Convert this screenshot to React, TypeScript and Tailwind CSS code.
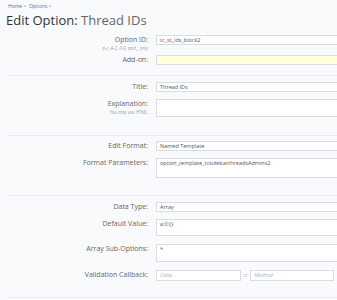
import React from "react";

type Row = {
  label: string;
  hint?: string;
  value?: string;
  kind?: "input" | "yellow" | "callback";
  h?: string;
};

function Field({ row }: { row: Row }) {
  if (row.kind === "callback") {
    return (
      <div className="flex items-center gap-[3px]">
        <div className="h-[11px] w-[85px] border border-[#dadee4] bg-white px-[3px] text-[5.5px] italic leading-[9px] text-[#b0b4ba]">
          Class
        </div>
        <span className="text-[6px] text-[#777]">::</span>
        <div className="h-[11px] w-[84px] border border-[#dadee4] bg-white px-[3px] text-[5.5px] italic leading-[9px] text-[#b0b4ba]">
          Method
        </div>
      </div>
    );
  }
  const bg = row.kind === "yellow" ? "bg-[#ffffdd]" : "bg-white";
  return (
    <div
      className={`w-[200px] border border-[#d8dde4] ${bg} px-[3px] text-[5.5px] text-[#555] ${
        row.h ?? "h-[10px]"
      } leading-[8px]`}
    >
      {row.value}
    </div>
  );
}

function FormRow({ row, mt }: { row: Row; mt: string }) {
  return (
    <div className={`flex ${mt}`}>
      <div className="w-[148px] shrink-0 text-right">
        <div className="text-[7px] leading-[10px] text-[#666]">{row.label}</div>
        {row.hint && (
          <div className="text-[4.5px] italic leading-[6px] text-[#a0a4aa]">{row.hint}</div>
        )}
      </div>
      <div className="ml-[8px]">
        <Field row={row} />
      </div>
    </div>
  );
}

function Sep({ mt }: { mt: string }) {
  return <div className={`ml-[8px] h-px bg-[#e6ebf0] ${mt}`} />;
}

export default function App() {
  return (
    <div
      className="h-[300px] w-[337px] overflow-hidden bg-[#f9fafc]"
      style={{ fontFamily: '"Open Sans", "DejaVu Sans", sans-serif' }}
    >
      <div className="px-[8px] pt-[3px] text-[5px] leading-[6px] text-[#5a6f90]">
        Home &gt; &nbsp;Options &gt;
      </div>
      <h1 className="mt-[4px] px-[6px] text-[13px] leading-[14px] text-[#333]">
        Edit Option: <span className="text-[#666]">Thread IDs</span>
      </h1>
      <div className="mt-[8px]">
        <FormRow
          mt="mt-0"
          row={{ label: "Option ID:", hint: "a-z, A-Z, 0-9, and _ only", value: "tc_st_ids_block2" }}
        />
        <FormRow mt="mt-[4px]" row={{ label: "Add-on:", kind: "yellow" }} />
        <Sep mt="mt-[10px]" />
        <FormRow mt="mt-[6px]" row={{ label: "Title:", value: "Thread IDs" }} />
        <FormRow
          mt="mt-[7px]"
          row={{ label: "Explanation:", hint: "You may use HTML.", h: "h-[18px]" }}
        />
        <Sep mt="mt-[18px]" />
        <FormRow mt="mt-[5px]" row={{ label: "Edit Format:", value: "Named Template" }} />
        <FormRow
          mt="mt-[7px]"
          row={{ label: "Format Parameters:", value: "option_template_tcsidebarthreadsAdmins2", h: "h-[20px]" }}
        />
        <Sep mt="mt-[17px]" />
        <FormRow mt="mt-[6px]" row={{ label: "Data Type:", value: "Array" }} />
        <FormRow mt="mt-[7px]" row={{ label: "Default Value:", value: "a:0:{}", h: "h-[17px]" }} />
        <FormRow mt="mt-[8px]" row={{ label: "Array Sub-Options:", value: "*", h: "h-[18px]" }} />
        <FormRow mt="mt-[8px]" row={{ label: "Validation Callback:", kind: "callback" }} />
        <Sep mt="mt-[16px]" />
      </div>
    </div>
  );
}
